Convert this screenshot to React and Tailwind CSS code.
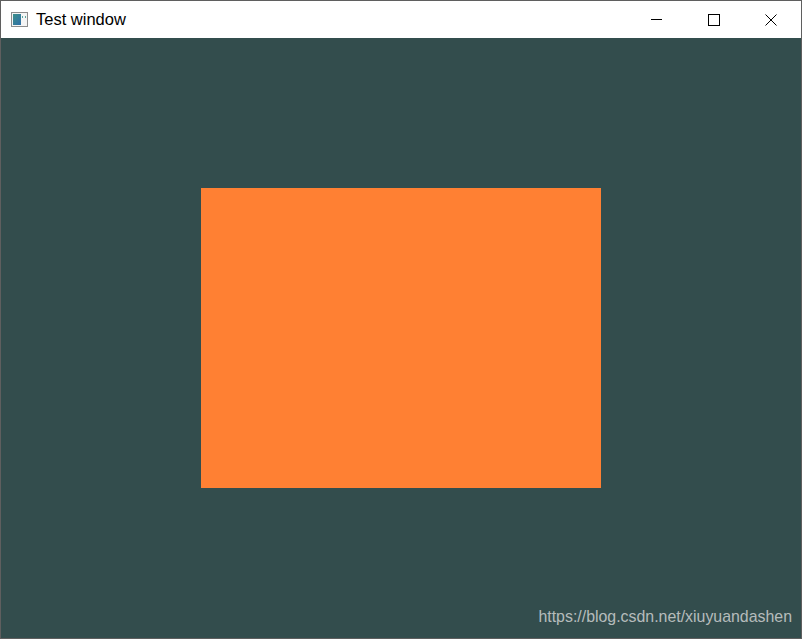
function WindowIcon() {
    return (
        <svg width="17" height="15" viewBox="0 0 17 15">
            <defs>
                <linearGradient id="pane" x1="0" y1="0" x2="1" y2="1">
                    <stop offset="0" stopColor="#3c8f8a" />
                    <stop offset="1" stopColor="#2f6fa8" />
                </linearGradient>
            </defs>
            <rect x="0.5" y="0.5" width="16" height="14" fill="#f4f4f4" stroke="#8c8c8c" />
            <rect x="2" y="2" width="8" height="11" fill="url(#pane)" />
            <rect x="11" y="4" width="1" height="2" fill="#5aa7a0" />
            <rect x="14" y="4" width="1" height="2" fill="#5aa7a0" />
        </svg>
    );
}

export default function App() {
    return (
        <div className="relative w-[802px] h-[639px] border border-[#5f5f5f] bg-white flex flex-col font-['Liberation_Sans',Arial,sans-serif]">
            <div className="h-[37px] flex items-center bg-white">
                <div className="pl-[10px] pr-[8px] flex items-center">
                    <WindowIcon />
                </div>
                <span className="text-[16.5px] text-black">Test window</span>
                <div className="ml-auto mr-[1px] flex h-full">
                    <button className="w-[58px] h-full flex items-center justify-center">
                        <svg width="12" height="12" viewBox="0 0 12 12"><path d="M1 5.5h11" stroke="#000" strokeWidth="1" /></svg>
                    </button>
                    <button className="w-[57px] h-full flex items-center justify-center">
                        <svg width="12" height="12" viewBox="0 0 12 12"><rect x="0.5" y="0.5" width="11" height="11" fill="none" stroke="#000" strokeWidth="1" /></svg>
                    </button>
                    <button className="w-[58px] h-full flex items-center justify-center">
                        <svg width="12" height="12" viewBox="0 0 12 12"><path d="M0.5 0.5l11 11M11.5 0.5l-11 11" stroke="#000" strokeWidth="1" /></svg>
                    </button>
                </div>
            </div>
            <div className="h-[600px] bg-[#334d4d] flex items-center justify-center">
                <div className="w-[400px] h-[300px] bg-[#ff8033]" />
            </div>
            <span className="absolute right-[9px] bottom-[9px] text-[15.9px] text-[#c4c8c8] opacity-90">
                https://blog.csdn.net/xiuyuandashen
            </span>
        </div>
    );
}
